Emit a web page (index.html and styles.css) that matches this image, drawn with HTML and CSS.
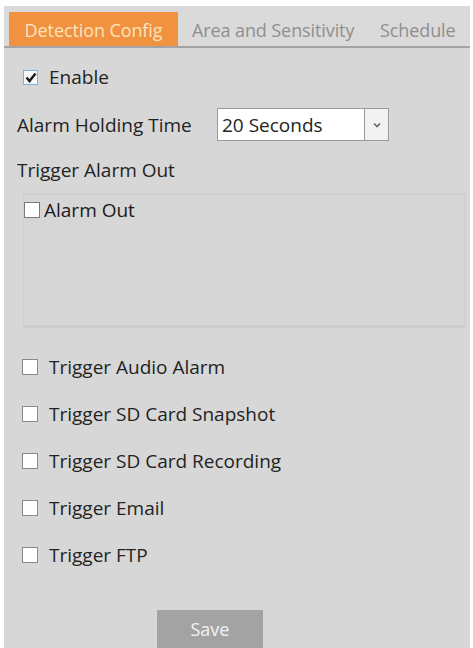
FILE: index.html
```html
<!DOCTYPE html>
<html>
<head>
<meta charset="utf-8">
<link rel="stylesheet" href="styles.css">
</head>
<body>
<div class="panel">
  <div class="tabs">
    <div class="tab active">Detection Config</div>
    <div class="tab second">Area and Sensitivity</div>
    <div class="tab third">Schedule</div>
  </div>
  <div class="content">
    <div class="row enable-row">
      <span class="cb checked"><svg width="12" height="11" viewBox="0 0 12 11"><path d="M1.5 5.5 L4.5 9 L10.5 1.5" fill="none" stroke="#1a1a1a" stroke-width="2.4"/></svg></span>
      <span class="label">Enable</span>
    </div>
    <div class="row hold-row">
      <span class="label">Alarm Holding Time</span>
      <div class="select">
        <span class="select-text">20 Seconds</span>
        <span class="select-arrow"><svg width="8" height="6" viewBox="0 0 8 6"><path d="M1 1.5 L4 4.5 L7 1.5" fill="none" stroke="#666" stroke-width="1.6"/></svg></span>
      </div>
    </div>
    <div class="row title-row"><span class="label">Trigger Alarm Out</span></div>
    <div class="alarm-box">
      <div class="alarm-item"><span class="cb small"></span><span class="label dark">Alarm Out</span></div>
    </div>
    <div class="list">
      <div class="row item"><span class="cb"></span><span class="label">Trigger Audio Alarm</span></div>
      <div class="row item"><span class="cb"></span><span class="label">Trigger SD Card Snapshot</span></div>
      <div class="row item"><span class="cb"></span><span class="label">Trigger SD Card Recording</span></div>
      <div class="row item"><span class="cb"></span><span class="label">Trigger Email</span></div>
      <div class="row item"><span class="cb"></span><span class="label">Trigger FTP</span></div>
    </div>
    <div class="actions"><button class="save">Save</button></div>
  </div>
</div>
</body>
</html>
```
FILE: styles.css
```css
html, body {
  margin: 0;
  padding: 0;
  background: #ffffff;
}
body {
  font-family: "Open Sans", "Noto Sans", sans-serif;
  width: 473px;
  height: 648px;
  overflow: hidden;
}
.panel {
  margin: 6px 3px 0 4px;
  height: 642px;
  background: #d7d7d7;
  display: flex;
  flex-direction: column;
}
.tabs {
  display: flex;
  align-items: flex-end;
  height: 40px;
  background: #dadada;
  border-bottom: 2px solid #a4a4a4;
  padding-left: 5px;
}
.tab {
  height: 34px;
  display: flex;
  align-items: center;
  font-size: 18px;
  color: #8f8f8f;
  letter-spacing: -0.1px;
  padding-top: 2px;
  box-sizing: border-box;
}
.tab.active {
  width: 169px;
  justify-content: center;
  background: #f0923f;
  color: #fde3bf;
}
.tab.second {
  width: 189px;
  padding-left: 14px;
}
.tab.third {
  padding-left: 13px;
}
.content {
  display: flex;
  flex-direction: column;
  padding-left: 13px;
  flex: 1;
}
.row {
  display: flex;
  align-items: center;
}
.label {
  font-size: 19px;
  color: #232323;
  white-space: nowrap;
}
.label.dark {
  color: #1a1a1a;
}
.cb {
  width: 15px;
  height: 15px;
  box-sizing: border-box;
  background: #ffffff;
  border: 1px solid #8a8a8a;
  display: inline-flex;
  align-items: center;
  justify-content: center;
  flex-shrink: 0;
}
.cb.checked {
  border-color: #7fb2d6;
  background: #f4f8fb;
}
.enable-row {
  margin-top: 20px;
  padding-left: 6px;
  height: 18px;
}
.enable-row .cb {
  margin-right: 11px;
}
.hold-row {
  margin-top: 22px;
  height: 33px;
}
.hold-row .label {
  width: 200px;
}
.select {
  width: 172px;
  height: 33px;
  box-sizing: border-box;
  background: #ffffff;
  border: 1px solid #9a9a9a;
  display: flex;
  align-items: stretch;
}
.select-text {
  flex: 1;
  display: flex;
  align-items: center;
  padding-left: 4px;
  font-size: 19px;
  color: #232323;
}
.select-arrow {
  width: 23px;
  border-left: 1px solid #9a9a9a;
  background: #f2f2f2;
  display: flex;
  align-items: center;
  justify-content: center;
}
.title-row {
  margin-top: 17px;
  height: 24px;
}
.alarm-box {
  margin-top: 11px;
  margin-left: 6px;
  margin-right: 4px;
  height: 135px;
  border-top: 2px solid #cdcdcd;
  border-left: 1px solid #d0d0d0;
  border-bottom: 3px solid #cbcbcb;
  border-right: 2px solid #d0d0d0;
  background: #d6d6d6;
  box-sizing: border-box;
}
.alarm-item {
  display: flex;
  align-items: center;
  margin-top: 2px;
}
.cb.small {
  width: 16px;
  height: 16px;
  border-color: #7a7a7a;
  margin-right: 4px;
}
.list {
  display: flex;
  flex-direction: column;
  margin-top: 30px;
  padding-left: 5px;
  gap: 29px;
}
.item {
  height: 18px;
}
.item .cb {
  width: 16px;
  height: 16px;
  margin-right: 11px;
}
.actions {
  display: flex;
  padding-left: 140px;
  margin-top: auto;
}
.save {
  width: 106px;
  height: 38px;
  border: none;
  background: #a3a3a3;
  color: #f2f2f2;
  font-family: "Open Sans", "Noto Sans", sans-serif;
  font-size: 18px;
  padding: 0;
}
```
